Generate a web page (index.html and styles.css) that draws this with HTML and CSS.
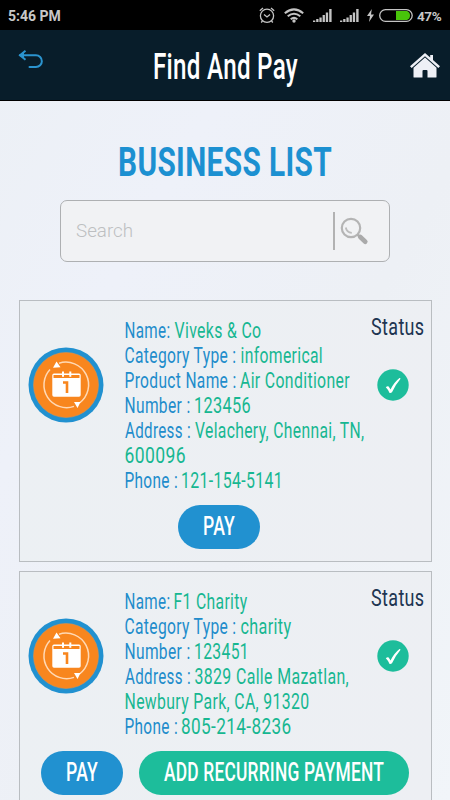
FILE: index.html
```html
<!DOCTYPE html>
<html lang="en">
<head>
<meta charset="utf-8">
<title>Find And Pay</title>
<link rel="stylesheet" href="styles.css">
</head>
<body>
<svg class="defs" aria-hidden="true">
  <symbol id="recurring" viewBox="0 0 76 76">
    <circle cx="38" cy="38" r="37.5" fill="#2191d0"/>
    <circle cx="38" cy="38" r="32.5" fill="#f8861e" stroke="#d8924f" stroke-width=".6"/>
    <g fill="none" stroke="#ffd9b5" stroke-width="1.5">
      <path d="M31 16.2A22.7 22.7 0 0 1 51.500 56"/>
      <path d="M46 59.4A22.7 22.7 0 0 1 22 22.500"/>
    </g>
    <path d="M28.500 14.500l4 5.800-7.500.4zM46 55h6.5l-3 6z" fill="#fff"/>
    <path d="M26 26.500h25a1.700 1.700 0 0 1 1.700 1.700V48a1.700 1.700 0 0 1-1.700 1.700H26a1.700 1.700 0 0 1-1.700-1.700V28.200a1.700 1.700 0 0 1 1.700-1.700z" fill="#fff"/>
    <path d="M25.500 28h26v3h-26z" fill="#f8861e"/>
    <path d="M35 24.500v5.200M42.300 24.500v5.200" stroke="#fff" stroke-width="2"/>
    <path d="M35 35.500h4V46" fill="none" stroke="#f8861e" stroke-width="2.600"/>
  </symbol>
  <symbol id="check" viewBox="0 0 32 32">
    <circle cx="16" cy="16" r="15.700" fill="#1dbd9b"/>
    <path d="M8.800 18.300q1.600-1.600 2.900-.8l1.800 3Q17 13.300 22.500 9q1.500-.2.700 1.200-5 5.800-8.200 13-1.300 1.200-2.600.6-1-2.900-3.600-5.500z" fill="#fff"/>
  </symbol>
  <symbol id="signal" viewBox="0 0 19 13">
    <path d="M0 13v-1.500h2.300V13zM3.200 13v-3h2.300v3zM6.400 13V8.500h2.300V13zM9.600 13V6h2.300v7zM12.800 13V3.500h2.300V13zM16.200 13V0h2.400v13z" fill="#c4c4c4"/>
  </symbol>
</svg>

<header class="status-bar">
  <span class="clock">5:46 PM</span>
  <svg class="alarm" width="16" height="17" viewBox="0 0 16 17" fill="none" stroke="#c4c4c4" stroke-width="1.300">
    <circle cx="8" cy="8.800" r="6.600"/><path d="M.8 3.800L4 1M15.200 3.800L12 1M5 7.500l3 2.500 3-2.500M3.500 14l-1.300 1.500M12.500 14l1.300 1.500"/>
  </svg>
  <svg class="wifi" width="20" height="15" viewBox="0 0 20 15" fill="none" stroke="#c4c4c4" stroke-width="2">
    <path d="M.8 5.200Q10-2.500 19.200 5.200M3.700 8.300q6.300-5.200 12.600 0M6.700 11.200q3.300-2.700 6.600 0"/><circle cx="10" cy="13" r="1.700" fill="#c4c4c4" stroke="none"/>
  </svg>
  <svg class="signal" width="19" height="13"><use href="#signal"/></svg>
  <svg class="signal second" width="19" height="13"><use href="#signal"/></svg>
  <svg class="bolt" width="7" height="13" viewBox="0 0 7 13"><path d="M4.800 0L0 7h3L2 13l5-7.500H4z" fill="#c4c4c4"/></svg>
  <svg class="battery" width="34" height="13" viewBox="0 0 34 13">
    <rect x=".7" y=".7" width="32.500" height="11.600" rx="5.800" fill="none" stroke="#c4c4c4" stroke-width="1.300"/>
    <path d="M17 2h11q3 1 3 4.500T28 11H17z" fill="#48c40a"/>
  </svg>
  <span class="percent">47%</span>
</header>

<nav class="app-bar">
  <svg class="back" width="26" height="20" viewBox="0 0 26 20" fill="none" stroke="#2b94cf" stroke-width="2">
    <path d="M2 5.300h16a5.600 5.600 0 0 1 0 11.700H11.500" stroke-linecap="round"/><path d="M7.500.8L2 5.300l5.500 4.500"/><path d="M1 5.300l5-3.500v7z" fill="#2b94cf" stroke="none"/>
  </svg>
  <svg class="bar-title" width="148" height="44"><text x="1" y="33" textLength="145" lengthAdjust="spacingAndGlyphs">Find And Pay</text></svg>
  <svg class="home" width="30" height="25" viewBox="0 0 30 25" fill="#eef0f6">
    <path d="M15 0l5.200 4.500V2H23v5l7 6.300-1.700 1.700L15 3.200 1.700 15 0 13.300z"/>
    <path d="M15 4.600l11.500 10.200V24q0 .5-.8.500H17.500v-6.500q0-1-1-1h-3q-1 0-1 1v6.500H4.300q-.8 0-.8-.5v-9.200z"/>
  </svg>
</nav>

<main class="page">
  <svg class="heading" width="216" height="50"><text x="1" y="38" textLength="214" lengthAdjust="spacingAndGlyphs">BUSINESS LIST</text></svg>

  <div class="search">
    <span class="placeholder">Search</span>
    <span class="divider"></span>
    <svg width="29" height="29" viewBox="0 0 29 29" fill="none">
      <circle cx="11" cy="11" r="9.200" stroke="#b4b4b4" stroke-width="2.200"/>
      <path d="M5.800 10.500q.8 5 6 5.300" stroke="#bcbcbc" stroke-width="1.800"/>
      <path d="M17.500 17.500l3 3" stroke="#b0b0b0" stroke-width="2.500"/>
      <path d="M20.300 20l5 4.700" stroke="#aaa" stroke-width="4.600" stroke-linecap="round"/>
    </svg>
  </div>

  <section class="card">
    <div class="card-body">
      <svg class="badge" width="76" height="76"><use href="#recurring"/></svg>
      <div class="details">
        <svg class="line"><text class="label" x="-.5" y="19" textLength="46" lengthAdjust="spacingAndGlyphs">Name:</text><text x="49.500" y="19" textLength="87" lengthAdjust="spacingAndGlyphs">Viveks &amp; Co</text></svg>
        <svg class="line"><text class="label" x="-.5" y="19" textLength="112" lengthAdjust="spacingAndGlyphs">Category Type :</text><text x="115.500" y="19" textLength="82.500" lengthAdjust="spacingAndGlyphs">infomerical</text></svg>
        <svg class="line"><text class="label" x="-.5" y="19" textLength="112" lengthAdjust="spacingAndGlyphs">Product Name :</text><text x="115" y="19" textLength="110" lengthAdjust="spacingAndGlyphs">Air Conditioner</text></svg>
        <svg class="line"><text class="label" x="-.5" y="19" textLength="66" lengthAdjust="spacingAndGlyphs">Number :</text><text x="69" y="19" textLength="57" lengthAdjust="spacingAndGlyphs">123456</text></svg>
        <svg class="line"><text class="label" x="0" y="19" textLength="66" lengthAdjust="spacingAndGlyphs">Address :</text><text x="70" y="19" textLength="169.500" lengthAdjust="spacingAndGlyphs">Velachery, Chennai, TN,</text></svg>
        <svg class="line"><text x="-.5" y="19" textLength="61.500" lengthAdjust="spacingAndGlyphs">600096</text></svg>
        <svg class="line"><text class="label" x="-.5" y="19" textLength="53.500" lengthAdjust="spacingAndGlyphs">Phone :</text><text x="56" y="19" textLength="102" lengthAdjust="spacingAndGlyphs">121-154-5141</text></svg>
      </div>
      <div class="state">
        <svg class="state-title" width="56" height="30"><text x="1" y="23" textLength="53.500" lengthAdjust="spacingAndGlyphs">Status</text></svg>
        <svg class="check" width="32" height="32"><use href="#check"/></svg>
      </div>
    </div>
    <div class="actions">
      <div class="button pay"><svg width="34" height="34"><text x="1" y="25" textLength="32" lengthAdjust="spacingAndGlyphs">PAY</text></svg></div>
    </div>
  </section>

  <section class="card">
    <div class="card-body">
      <svg class="badge" width="76" height="76"><use href="#recurring"/></svg>
      <div class="details">
        <svg class="line"><text class="label" x="-.5" y="19" textLength="46" lengthAdjust="spacingAndGlyphs">Name:</text><text x="48.500" y="19" textLength="74" lengthAdjust="spacingAndGlyphs">F1 Charity</text></svg>
        <svg class="line"><text class="label" x="-.5" y="19" textLength="112" lengthAdjust="spacingAndGlyphs">Category Type :</text><text x="115.500" y="19" textLength="51" lengthAdjust="spacingAndGlyphs">charity</text></svg>
        <svg class="line"><text class="label" x="-.5" y="19" textLength="66" lengthAdjust="spacingAndGlyphs">Number :</text><text x="69" y="19" textLength="55" lengthAdjust="spacingAndGlyphs">123451</text></svg>
        <svg class="line"><text class="label" x="0" y="19" textLength="66" lengthAdjust="spacingAndGlyphs">Address :</text><text x="69.500" y="19" textLength="154.500" lengthAdjust="spacingAndGlyphs">3829 Calle Mazatlan,</text></svg>
        <svg class="line"><text x="-.5" y="19" textLength="185" lengthAdjust="spacingAndGlyphs">Newbury Park, CA, 91320</text></svg>
        <svg class="line"><text class="label" x="-.5" y="19" textLength="53.500" lengthAdjust="spacingAndGlyphs">Phone :</text><text x="56" y="19" textLength="110.500" lengthAdjust="spacingAndGlyphs">805-214-8236</text></svg>
      </div>
      <div class="state">
        <svg class="state-title" width="56" height="30"><text x="1" y="23" textLength="53.500" lengthAdjust="spacingAndGlyphs">Status</text></svg>
        <svg class="check" width="32" height="32"><use href="#check"/></svg>
      </div>
    </div>
    <div class="actions two">
      <div class="button pay"><svg width="34" height="34"><text x="1" y="25" textLength="32" lengthAdjust="spacingAndGlyphs">PAY</text></svg></div>
      <div class="button recurring"><svg width="222" height="34"><text x="1" y="25" textLength="220" lengthAdjust="spacingAndGlyphs">ADD RECURRING PAYMENT</text></svg></div>
    </div>
  </section>
</main>
</body>
</html>
```

FILE: styles.css
```css
* { box-sizing: border-box; }
html, body { height: 800px; overflow: hidden; }
body {
  margin: 0;
  display: flex;
  flex-direction: column;
  font-family: Roboto, "Liberation Sans", sans-serif;
  background: linear-gradient(120deg, #ecf0f5 0%, #eef1f9 30%, #edf0f5 60%, #f1f5f9 100%);
}
svg { display: block; flex: none; overflow: visible; }
.defs { width: 0; height: 0; position: absolute; }

.status-bar {
  flex: none;
  height: 30px;
  display: flex;
  align-items: center;
  padding: 0 7px 0 8px;
  background: #000;
  color: #c8c8c8;
}
.clock { font-size: 14px; font-weight: 700; margin-right: auto; line-height: 30px; padding-top: 1px; }
.wifi { margin-left: 9px; }
.signal { margin-left: 9px; margin-top: 1px; }
.second { margin-left: 8px; }
.bolt { margin-left: 8px; }
.battery { margin-left: 5px; }
.percent { width: 26px; margin-left: 4px; font-size: 13.5px; font-weight: 700; letter-spacing: -.4px; padding-top: 1px; }

.app-bar {
  flex: none;
  height: 71px;
  display: flex;
  align-items: flex-start;
  justify-content: space-between;
  padding: 16px 10px 0 18px;
  background: #081d2a;
  border-bottom: 1px solid #000;
}
.back { margin-top: 4px; }
.bar-title { margin: 0 0 0 -3px; }
.bar-title text { font-size: 36px; font-weight: 500; letter-spacing: .4px; fill: #fff; }
.home { margin-top: 7px; }

.page { flex: none; display: flex; flex-direction: column; padding: 37px 19px 0; }
.heading { align-self: center; }
.heading text { font-size: 41.5px; font-weight: 700; letter-spacing: .5px; fill: #1c90d1; }

.search {
  align-self: center;
  width: 330px;
  height: 62px;
  margin-top: 12px;
  display: flex;
  align-items: center;
  padding: 0 20px 0 15px;
  border: 1px solid #aeb0b2;
  border-radius: 7px;
  background: #f1f2f4;
}
.placeholder { flex: 1; font-size: 18.8px; font-weight: 300; color: #bdbfc1; }
.divider { width: 2px; height: 38px; margin-right: 5px; background: #b2b2b2; }

.card {
  width: 413px;
  height: 262px;
  margin-top: 38px;
  border: 1px solid #b9bdc1;
  background: linear-gradient(100deg, #ecf0f3, #edeff3);
}
.card + .card { margin-top: 9px; }
.card-body { display: flex; padding: 18px 7px 0 8px; }
.badge { margin-top: 28px; }
.details { width: 246px; margin-left: 21px; }
.line { width: 246px; height: 25px; }
.line text { font-size: 22.5px; font-weight: 400; letter-spacing: .5px; fill: #16b791; }
.line .label { fill: #218ccb; }
.state { display: flex; flex-direction: column; align-items: center; margin: -7px 0 0 0; width: 54px; flex: none; }
.state-title text { font-size: 24.5px; letter-spacing: .5px; fill: #203551; }
.check { margin: 27px 10px 0 0; }

.actions { display: flex; padding: 11px 0 0 158px; }
.actions.two { padding: 11px 0 0 21px; gap: 16px; }
.button {
  height: 44px;
  border-radius: 22px;
  display: flex;
  align-items: center;
  justify-content: center;
}
.button text { font-size: 25px; font-weight: 500; letter-spacing: .3px; fill: #fff; }
.pay { width: 82px; background: #2191d0; }
.recurring { width: 270px; background: #1dbd9b; }
```
